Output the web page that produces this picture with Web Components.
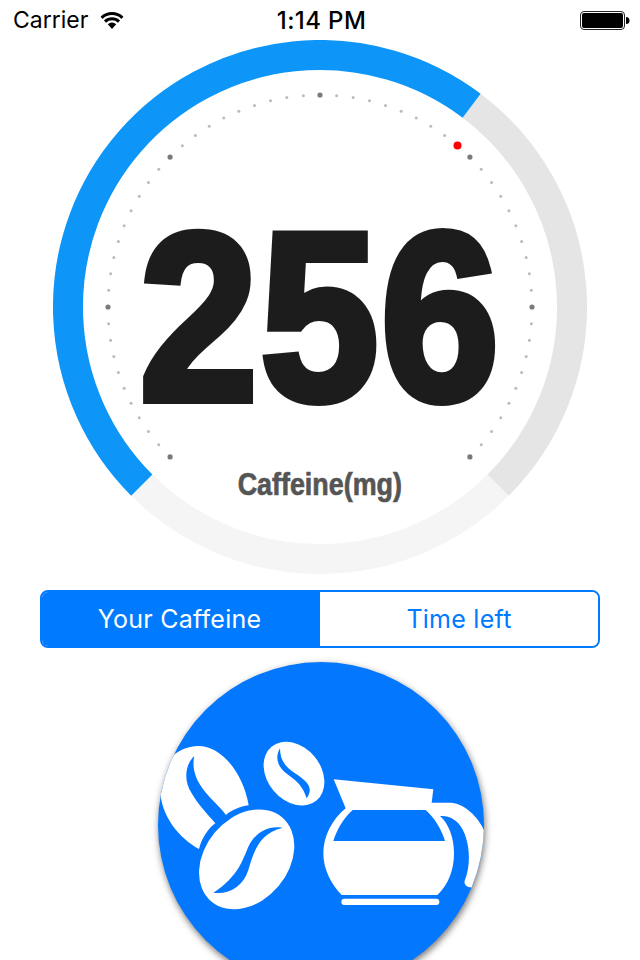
<!DOCTYPE html>
<html>
<head>
<meta charset="utf-8">
<style>
  html, body { margin: 0; height: 960px; overflow: hidden; background: #fff; }
  body { font-family: Inter, "Liberation Sans", sans-serif; }
</style>
</head>
<body>
<c-status-bar carrier="Carrier" time="1:14 PM"></c-status-bar>
<c-gauge value="256" label="Caffeine(mg)" fill="172" gray="98"></c-gauge>
<c-segmented>
  <c-segment active>Your Caffeine</c-segment>
  <c-segment>Time left</c-segment>
</c-segmented>
<c-coffee-button></c-coffee-button>

<script>
class CStatusBar extends HTMLElement {
  constructor() {
    super();
    this.attachShadow({ mode: 'open' });
  }

  connectedCallback() {
    this.shadowRoot.innerHTML = `
      <style>
        :host { display: grid; grid-template-columns: 1fr auto 1fr; align-items: center; height: 40px; padding: 0 10px 0 13px; color: #000; font-size: 23px; letter-spacing: 0; }
        .left { display: flex; align-items: center; gap: 12px; }
        .time { font-weight: 500; font-size: 24px; letter-spacing: .4px; }
        .right { display: flex; justify-content: flex-end; }
        svg { display: block; }
      </style>
      <div class="left">
        <span>${this.getAttribute('carrier')}</span>
        <svg width="24" height="18" viewBox="0 0 24 18">
          <path d="M12 18L7.8 13.2A6 6 0 0 1 16.2 13.2Z" fill="#000"/>
          <path d="M5 10.6A10 10 0 0 1 19 10.6M1.6 6.8A15 15 0 0 1 22.4 6.8" fill="none" stroke="#000" stroke-width="3"/>
        </svg>
      </div>
      <span class="time">${this.getAttribute('time')}</span>
      <div class="right">
        <svg width="50" height="19" viewBox="0 0 50 19">
          <rect x="0.5" y="0.5" width="44" height="18" rx="3.5" fill="#fff" stroke="#222"/>
          <rect x="2" y="2" width="41" height="15" rx="2" fill="#000"/>
          <path d="M46 6a3.5 3.5 0 0 1 0 7Z" fill="#000"/>
        </svg>
      </div>
    `;
  }
}
customElements.define('c-status-bar', CStatusBar);

class CGauge extends HTMLElement {
  constructor() {
    super();
    this.attachShadow({ mode: 'open' });
  }

  arc(from, to, r) {
    const pt = (a) => {
      const rad = a * Math.PI / 180;
      return (267 + r * Math.sin(rad)).toFixed(2) + ' ' + (267 - r * Math.cos(rad)).toFixed(2);
    };
    return `M${pt(from)}A${r} ${r} 0 ${to - from > 180 ? 1 : 0} 1 ${pt(to)}`;
  }

  connectedCallback() {
    // ticks run from -135 to 135 degrees, every 10th one is a big dot
    let dots = '';
    for (let i = 0; i <= 60; i++) {
      const rad = (-135 + i * 4.5) * Math.PI / 180;
      const x = (267 + 212 * Math.sin(rad)).toFixed(2);
      const y = (267 - 212 * Math.cos(rad)).toFixed(2);
      dots += i % 10 === 0
        ? `<circle cx="${x}" cy="${y}" r="2.6" fill="#7a7a7a"/>`
        : `<circle cx="${x}" cy="${y}" r="1.5" fill="#bbb"/>`;
    }
    const end = -135 + Number(this.getAttribute('fill'));

    this.shadowRoot.innerHTML = `
      <style>
        :host { display: block; position: relative; width: 534px; height: 534px; margin-left: 53px; }
        svg { display: block; }
        .center { position: absolute; left: 0; right: 0; display: flex; justify-content: center; white-space: nowrap; font-family: "Liberation Sans", Arial, sans-serif; font-weight: 700; }
        .value { top: 182px; height: 190px; line-height: 190px; font-size: 240px; color: #1c1c1c; -webkit-text-stroke: 8px #1c1c1c; letter-spacing: 2px; }
        .value span { display: block; transform: scaleX(.89); }
        .label { top: 426px; height: 36px; line-height: 36px; font-size: 32px; color: #555; -webkit-text-stroke: .7px #555; }
        .label span { display: block; transform: scaleX(.84); }
      </style>
      <svg width="534" height="534" viewBox="0 0 534 534" fill="none" stroke-width="30">
        <path d="${this.arc(135, 225, 252)}" stroke="#f5f5f5"/>
        <path d="${this.arc(end, 135, 252)}" stroke="#e5e5e5"/>
        <path d="${this.arc(-135, end, 252)}" stroke="#0d96f7"/>
        <g stroke="none">${dots}<circle cx="404.5" cy="105.5" r="4" fill="#ff0000"/></g>
      </svg>
      <div class="center value"><span>${this.getAttribute('value')}</span></div>
      <div class="center label"><span>${this.getAttribute('label')}</span></div>
    `;
  }
}
customElements.define('c-gauge', CGauge);

class CSegmented extends HTMLElement {
  constructor() {
    super();
    this.attachShadow({ mode: 'open' });
    this.shadowRoot.innerHTML = `
      <style>
        :host { display: grid; grid-template-columns: 1fr 1fr; box-sizing: border-box; width: 560px; height: 58px; margin: 16px 0 14px 40px; border: 2px solid #007aff; border-radius: 8px; overflow: hidden; }
      </style>
      <slot></slot>
    `;
  }
}
customElements.define('c-segmented', CSegmented);

class CSegment extends HTMLElement {
  constructor() {
    super();
    this.attachShadow({ mode: 'open' });
    this.shadowRoot.innerHTML = `
      <style>
        :host { display: flex; align-items: center; justify-content: center; font-size: 25px; letter-spacing: .25px; color: #007aff; background: #fff; }
        :host([active]) { color: #fff; background: #007aff; padding-right: 3px; }
      </style>
      <slot></slot>
    `;
  }
}
customElements.define('c-segment', CSegment);

class CCoffeeButton extends HTMLElement {
  constructor() {
    super();
    this.attachShadow({ mode: 'open' });
  }

  connectedCallback() {
    this.shadowRoot.innerHTML = `
      <style>
        :host { display: block; width: 326px; height: 326px; margin-left: 158px; border-radius: 50%; background: #0477ff; box-shadow: 1px 3px 7px rgba(0,0,0,.55); overflow: hidden; }
        svg { display: block; }
      </style>
      <svg width="326" height="326" viewBox="158 662 326 326">
        <g transform="translate(150 730) scale(.33333)" fill="#fff">
          <!-- big bean, its slit opens into the gap beside the front bean -->
          <path d="M147 357C90 325 30 260 30 170C30 90 90 48 145 48C215 48 280 130 296 226C270 230 245 240 228 255C215 235 185 210 165 185C135 150 125 110 133 78C105 105 100 150 125 190C145 225 175 255 196 280C175 295 155 325 147 357Z"/>
          <ellipse cx="432" cy="131" rx="105" ry="80" transform="rotate(50 432 131)"/>
          <ellipse cx="290" cy="388" rx="165" ry="125" transform="rotate(-50 290 388)"/>
          <path d="M551 148L850 178L845 218L905 218C960 225 1010 290 1015 345L1000 480L960 472C948 472 940 460 945 450C965 400 960 320 925 280C905 260 890 258 870 258C895 280 912 320 912 370C912 420 895 465 862 495L575 495C545 465 520 420 520 370C520 320 545 270 587 235Z"/>
          <rect x="574" y="506" width="294" height="19" rx="9"/>
          <g fill="#0477ff">
            <path d="M390 55C378 75 378 100 400 122C425 145 455 155 470 205C495 170 465 150 435 130C410 112 390 95 390 55Z"/>
            <path d="M398 293C350 285 315 310 295 350C280 385 265 440 190 488C235 495 280 470 295 420C310 370 325 310 398 293Z"/>
            <path d="M608 240L827 240C855 265 875 300 885 333L550 333C560 300 580 265 608 240Z"/>
          </g>
        </g>
      </svg>
    `;
  }
}
customElements.define('c-coffee-button', CCoffeeButton);
</script>
</body>
</html>
